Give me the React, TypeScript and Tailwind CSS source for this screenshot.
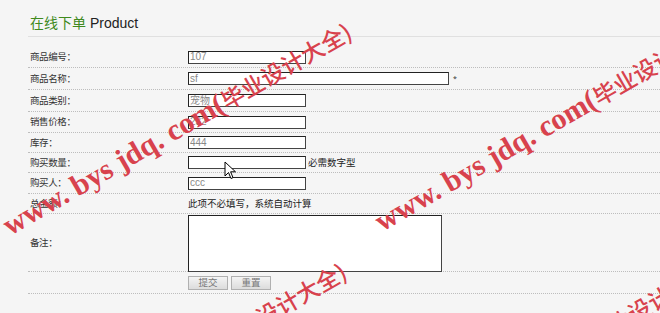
import React from "react";

const cjk = { fontFamily: '"Noto Sans CJK SC", "Liberation Sans", sans-serif' };

function Field({ value, long }: { value: string; long?: boolean }) {
  return (
    <div
      className={`${long ? "w-[261px]" : "w-[118px]"} h-[13px] bg-white border border-[#444] border-t-[#222] border-l-[#222] flex items-center pl-[1px] text-[10px] leading-none text-[#888]`}
      style={{ fontFamily: '"Liberation Sans", "Noto Sans CJK SC", sans-serif' }}
    >
      {value}
    </div>
  );
}

function Row({
  label,
  h,
  children,
}: {
  label?: string;
  h: string;
  children?: React.ReactNode;
}) {
  return (
    <div className={`flex items-center border-b border-dotted border-[#bdbdbd] ${h}`}>
      <div className="w-[160px] pl-[2px] text-[9.5px] text-[#333] leading-none tracking-[-0.4px]" style={cjk}>
        {label}
      </div>
      <div className="flex items-center">{children}</div>
    </div>
  );
}

function Watermark({ left, top }: { left: string; top: string }) {
  return (
    <div
      className={`absolute ${left} ${top} origin-left rotate-[-30deg] whitespace-nowrap leading-[30px] text-[#d8424d] pointer-events-none`}
    >
      <span className="text-[30px] font-bold" style={{ fontFamily: '"Liberation Serif", serif' }}>
        www. bys jdq. com(
      </span>
      <span className="text-[23px] font-medium" style={{ fontFamily: '"Noto Sans CJK SC", sans-serif' }}>
        毕业设计大全)
      </span>
    </div>
  );
}

export default function App() {
  return (
    <div className="relative w-[660px] h-[313px] overflow-hidden bg-[#f5f5f5]">
      <div className="pl-[28px]">
        <div className="h-[37px] border-b border-[#e0e0e0] pt-[14px] pl-[2px] text-[14px] leading-[16px]" style={cjk}>
          <span className="text-[#3f8a1d]">在线下单</span>
          <span className="text-[#222]" style={{ fontFamily: '"Liberation Sans", sans-serif' }}> Product</span>
        </div>
        <div className="mt-[10px]">
          <Row label="商品编号：" h="h-[21px]">
            <Field value="107" />
          </Row>
          <Row label="商品名称：" h="h-[22px]">
            <Field value="sf" long />
            <span className="ml-[4px] text-[7px] text-[#333] leading-none">*</span>
          </Row>
          <Row label="商品类别：" h="h-[22px]">
            <Field value="宠物" />
          </Row>
          <Row label="销售价格：" h="h-[21px]">
            <Field value="232" />
          </Row>
          <Row label="库存：" h="h-[20px]">
            <Field value="444" />
          </Row>
          <Row label="购买数量：" h="h-[20px]">
            <Field value="" />
            <span className="ml-[2px] text-[9.5px] text-[#222] leading-none" style={cjk}>
              必需数字型
            </span>
          </Row>
          <Row label="购买人：" h="h-[21px]">
            <Field value="ccc" />
          </Row>
          <Row label="总金额：" h="h-[20px]">
            <span className="text-[9.5px] text-[#222] leading-none" style={cjk}>
              此项不必填写，系统自动计算
            </span>
          </Row>
          <Row label="备注：" h="h-[58px]">
            <div className="w-[254px] h-[57px] mt-[1px] bg-white border border-[#444] border-t-[#222] border-l-[#222]" />
          </Row>
          <Row h="h-[22px]">
            <div className="flex gap-[3px]">
              <button
                className="w-[40px] h-[14px] border border-[#b0b0b0] bg-gradient-to-b from-[#f4f4f4] to-[#dcdcdc] text-[9.5px] leading-none text-[#777]"
                style={cjk}
              >
                提交
              </button>
              <button
                className="w-[40px] h-[14px] border border-[#b0b0b0] bg-gradient-to-b from-[#f4f4f4] to-[#dcdcdc] text-[9.5px] leading-none text-[#777]"
                style={cjk}
              >
                重置
              </button>
            </div>
          </Row>
        </div>
      </div>

      <svg className="absolute left-[224px] top-[161px]" width="13" height="19" viewBox="0 0 13 19">
        <path d="M1 1 L1 15 L4.5 11.5 L7 17.5 L9 16.6 L6.6 10.8 L11.5 10.8 Z" fill="white" stroke="black" strokeWidth="1" strokeLinejoin="round" />
      </svg>

      <Watermark left="left-[6px]" top="top-[212px]" />
      <Watermark left="left-[378px]" top="top-[208px]" />
      <Watermark left="left-[1px]" top="top-[452px]" />
      <Watermark left="left-[373px]" top="top-[448px]" />
    </div>
  );
}
